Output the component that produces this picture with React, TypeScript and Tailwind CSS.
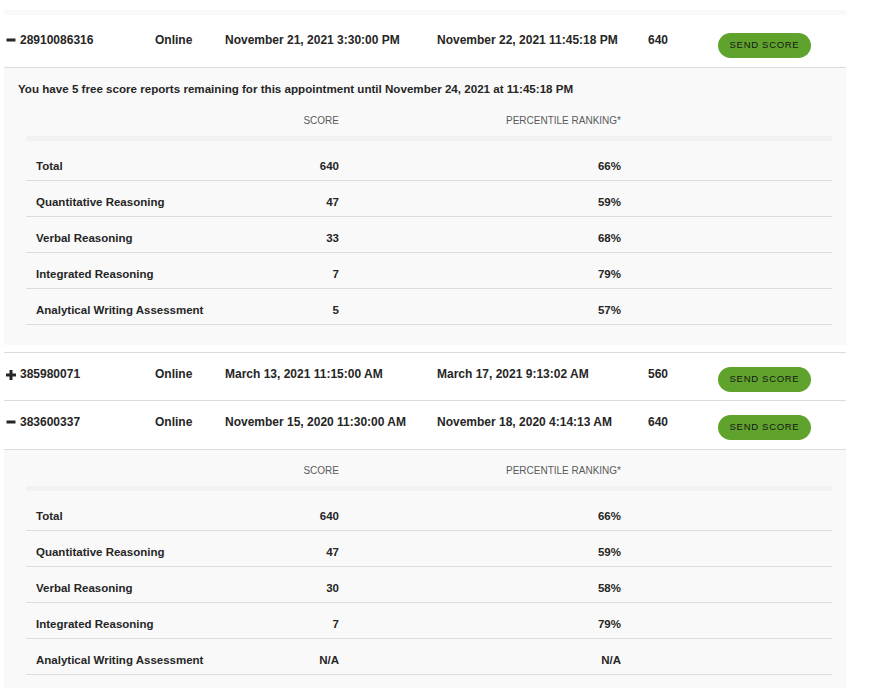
import React from 'react';

interface Appointment {
  id: string;
  mode: string;
  start: string;
  end: string;
  score: string;
  open: boolean;
}

interface ScoreLine {
  label: string;
  score: string;
  pct: string;
}

const firstScores: ScoreLine[] = [
  { label: 'Total', score: '640', pct: '66%' },
  { label: 'Quantitative Reasoning', score: '47', pct: '59%' },
  { label: 'Verbal Reasoning', score: '33', pct: '68%' },
  { label: 'Integrated Reasoning', score: '7', pct: '79%' },
  { label: 'Analytical Writing Assessment', score: '5', pct: '57%' },
];

const lastScores: ScoreLine[] = [
  { label: 'Total', score: '640', pct: '66%' },
  { label: 'Quantitative Reasoning', score: '47', pct: '59%' },
  { label: 'Verbal Reasoning', score: '30', pct: '58%' },
  { label: 'Integrated Reasoning', score: '7', pct: '79%' },
  { label: 'Analytical Writing Assessment', score: 'N/A', pct: 'N/A' },
];

const font = { fontFamily: '"Liberation Sans", Arial, sans-serif' };

function Toggle({ open }: { open: boolean }) {
  return (
    <svg width="10" height="10" viewBox="0 0 10 10" className="mr-[4px] mt-[1px] shrink-0">
      {open ? (
        <rect x="0.5" y="2.5" width="9" height="3" fill="#262626" />
      ) : (
        <>
          <rect x="0" y="3.5" width="10" height="3" fill="#262626" />
          <rect x="3.5" y="0" width="3" height="10" fill="#262626" />
        </>
      )}
    </svg>
  );
}

function AppointmentRow({ a, pad }: { a: Appointment; pad: string }) {
  return (
    <div className={`flex items-start border-b border-[#dcdcdc] pl-[2px] text-[12px] font-bold leading-[14px] text-[#262626] ${pad}`}>
      <div className="w-[149px] flex items-center">
        <Toggle open={a.open} />
        <span>{a.id}</span>
      </div>
      <div className="w-[70px]">{a.mode}</div>
      <div className="w-[212px]">{a.start}</div>
      <div className="w-[211px]">{a.end}</div>
      <div className="w-[70px]">{a.score}</div>
      <button className="w-[93px] h-[25px] pb-[1px] rounded-full bg-[#5fa32d] text-[9.5px] font-normal tracking-[0.7px] text-[#161616] leading-none">
        SEND SCORE
      </button>
    </div>
  );
}

function ScoreTable({ rows }: { rows: ScoreLine[] }) {
  return (
    <div className="ml-[22px] mr-[14px]">
      <div className="grid grid-cols-[200px_113px_282px] text-[10px] leading-[14px] text-[#5a5a5a] pb-[8px]">
        <div />
        <div className="text-right">SCORE</div>
        <div className="text-right">PERCENTILE RANKING*</div>
      </div>
      <div className="h-[5px] bg-[#f2f2f2]" />
      {rows.map((r, i) => (
        <div
          key={r.label}
          className={`grid grid-cols-[200px_113px_282px] border-b border-[#dcdcdc] text-[11.5px] font-bold leading-[14px] text-[#262626] pb-[7px] ${i === 0 ? 'pt-[18px]' : 'pt-[14px]'}`}
        >
          <div className="pl-[10px] whitespace-nowrap">{r.label}</div>
          <div className="text-right">{r.score}</div>
          <div className="text-right">{r.pct}</div>
        </div>
      ))}
    </div>
  );
}

export default function App() {
  return (
    <div className="min-h-screen bg-white pt-[10px] overflow-hidden" style={font}>
      <div className="ml-[4px] w-[842px]">
        <div className="h-[5px] bg-[#f9f9f9]" />

        <AppointmentRow
          pad="pt-[18px] pb-[9px]"
          a={{ id: '28910086316', mode: 'Online', start: 'November 21, 2021 3:30:00 PM', end: 'November 22, 2021 11:45:18 PM', score: '640', open: true }}
        />
        <div className="border-b border-[#dcdcdc] pb-[7px]">
          <div className="bg-[#f9f9f9] pt-[14px] pb-[20px]">
            <div className="pl-[14px] text-[11.6px] font-bold leading-[14px] text-[#262626] mb-[18px]">
              You have 5 free score reports remaining for this appointment until November 24, 2021 at 11:45:18 PM
            </div>
            <ScoreTable rows={firstScores} />
          </div>
        </div>

        <AppointmentRow
          pad="pt-[14px] pb-[8px]"
          a={{ id: '385980071', mode: 'Online', start: 'March 13, 2021 11:15:00 AM', end: 'March 17, 2021 9:13:02 AM', score: '560', open: false }}
        />
        <AppointmentRow
          pad="pt-[14px] pb-[9px]"
          a={{ id: '383600337', mode: 'Online', start: 'November 15, 2020 11:30:00 AM', end: 'November 18, 2020 4:14:13 AM', score: '640', open: true }}
        />
        <div className="bg-[#f9f9f9] pt-[14px] pb-[20px]">
          <ScoreTable rows={lastScores} />
        </div>
      </div>
    </div>
  );
}
